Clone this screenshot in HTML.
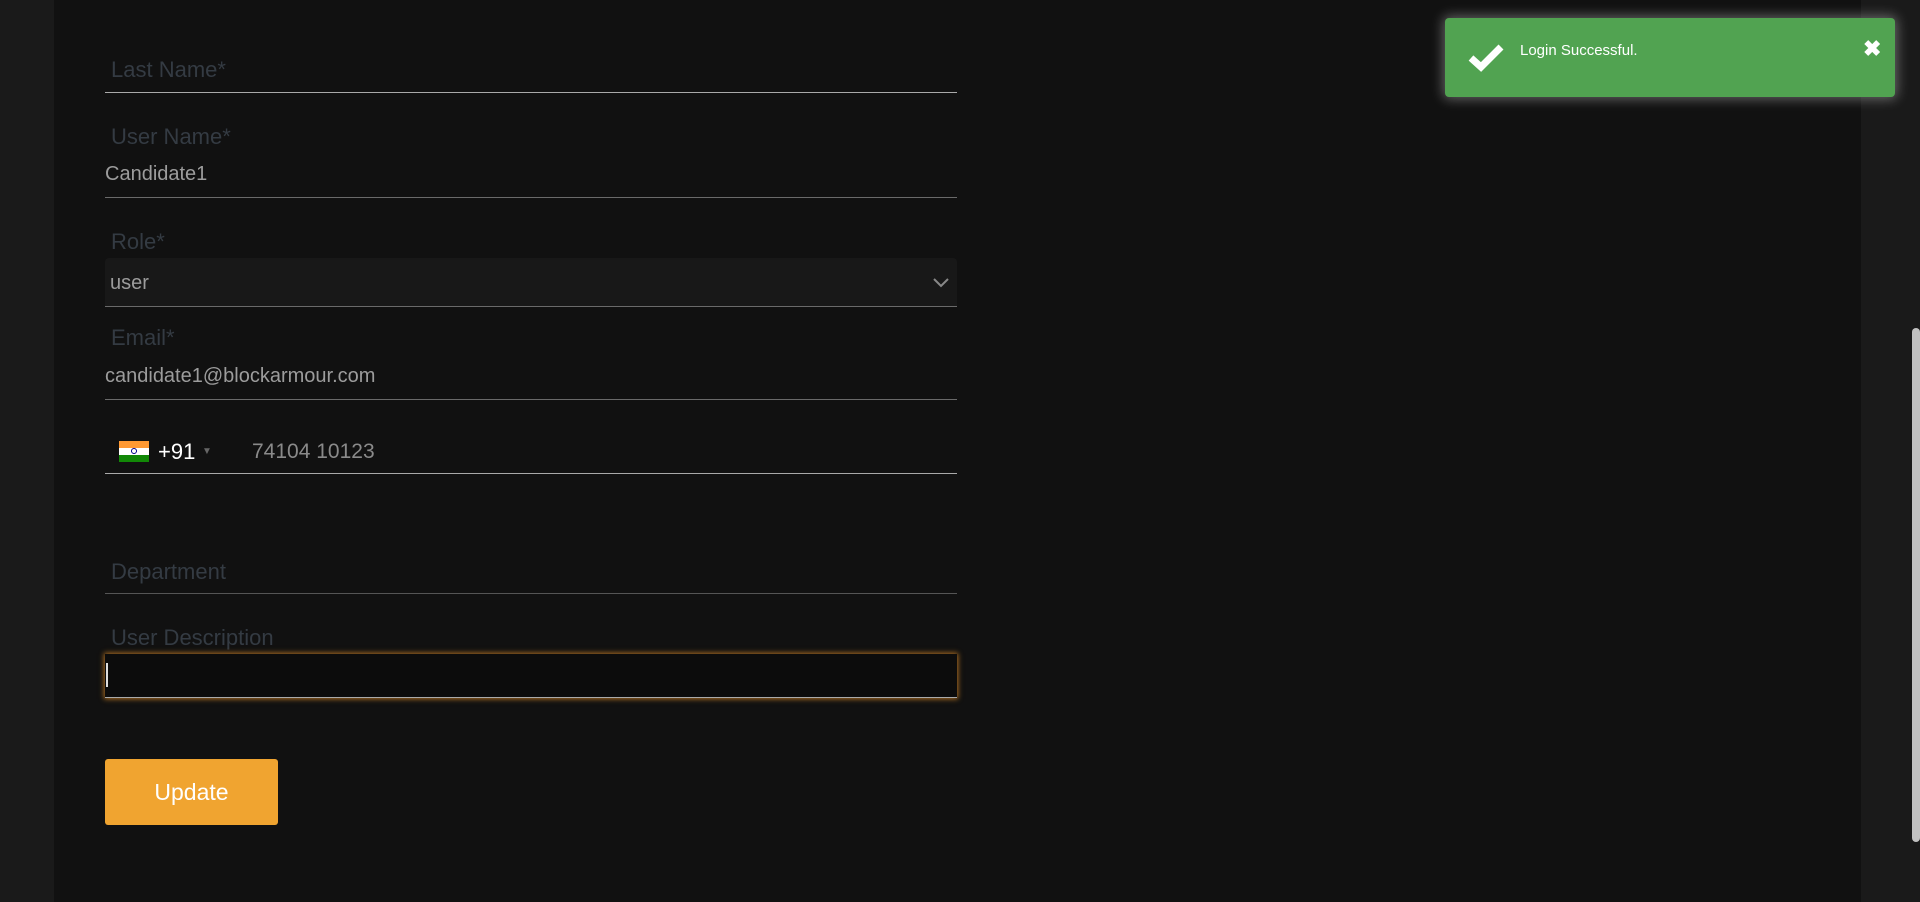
<!DOCTYPE html>
<html><head><meta charset="utf-8"><style>
html,body{margin:0;padding:0;width:1920px;height:902px;overflow:hidden;background:#1a1a1a;font-family:"Liberation Sans",sans-serif;}
.main{position:absolute;left:54px;top:0;width:1807px;height:902px;background:#111;}
.lbl{position:absolute;left:111px;color:#343b43;font-size:22px;}
.val{position:absolute;left:105px;color:#9c9c9c;font-size:20px;}
.line{position:absolute;left:105px;width:852px;height:1px;background:#6a6a6a;}
.sb{position:absolute;left:1912px;top:328px;width:8px;height:514px;background:#c1c1c1;border-radius:4px;}
</style></head><body>
<div class="main"></div>
<div class="lbl" style="top:57px">Last Name*</div>
<div class="line" style="top:92px;background:#aaa"></div>
<div class="lbl" style="top:124px">User Name*</div>
<div class="val" style="top:163px">Candidate1</div>
<div class="line" style="top:197px"></div>
<div class="lbl" style="top:229px">Role*</div>
<div style="position:absolute;left:105px;top:258px;width:852px;height:48px;background:#181818;border-radius:4px 4px 0 0;"></div>
<div class="val" style="top:272px;left:110px">user</div>
<svg style="position:absolute;left:932px;top:277px" width="18" height="12" viewBox="0 0 18 12"><path d="M2 2 L9 9 L16 2" stroke="#888" stroke-width="2" fill="none"/></svg>
<div class="line" style="top:306px"></div>
<div class="lbl" style="top:325px">Email*</div>
<div class="val" style="top:365px">candidate1@blockarmour.com</div>
<div class="line" style="top:399px"></div>
<div style="position:absolute;left:119px;top:441px;width:30px;height:21px;">
<div style="height:7px;background:#f93"></div><div style="height:7px;background:#fff;position:relative"><div style="position:absolute;left:12px;top:0;width:6px;height:6px;border:1px solid #008;border-radius:50%;box-sizing:border-box"></div></div><div style="height:7px;background:#128807"></div></div>
<div style="position:absolute;left:158px;top:439px;color:#fff;font-size:22px">+91</div>
<div style="position:absolute;left:202px;top:446px;color:#666;font-size:10px">▼</div>
<div style="position:absolute;left:252px;top:440px;color:#8a8a8a;font-size:21px">74104 10123</div>
<div class="line" style="top:473px;background:#aaa"></div>
<div class="lbl" style="top:559px">Department</div>
<div class="line" style="top:593px;background:#555"></div>
<div class="lbl" style="top:625px">User Description</div>
<div style="position:absolute;left:105px;top:654px;width:852px;height:44px;background:#0c0c0c;border-bottom:1px solid #aaa;box-sizing:border-box;box-shadow:0 0 5px 1px rgba(240,150,40,.7);"></div>
<div style="position:absolute;left:106px;top:663px;width:2px;height:24px;background:#ddd"></div>
<div style="position:absolute;left:105px;top:759px;width:173px;height:66px;background:#f0a430;border-radius:3px;color:#fff;font-size:23px;line-height:66px;text-align:center">Update</div>
<div class="sb"></div>
<div style="position:absolute;left:1445px;top:18px;width:450px;height:79px;background:#51a351;border-radius:4px;box-shadow:0 0 12px 2px rgba(255,255,255,.35);">
<svg style="position:absolute;left:22px;top:24px" width="38" height="30" viewBox="0 0 38 30"><path d="M4 16 L14 25 L34 5" stroke="#fff" stroke-width="7" fill="none"/></svg>
<div style="position:absolute;left:75px;top:24px;color:#fff;font-size:15px">Login Successful.</div>
<div style="position:absolute;left:418px;top:18px;color:#fff;font-size:22px;font-weight:bold">✖</div>
</div>
</body></html>
